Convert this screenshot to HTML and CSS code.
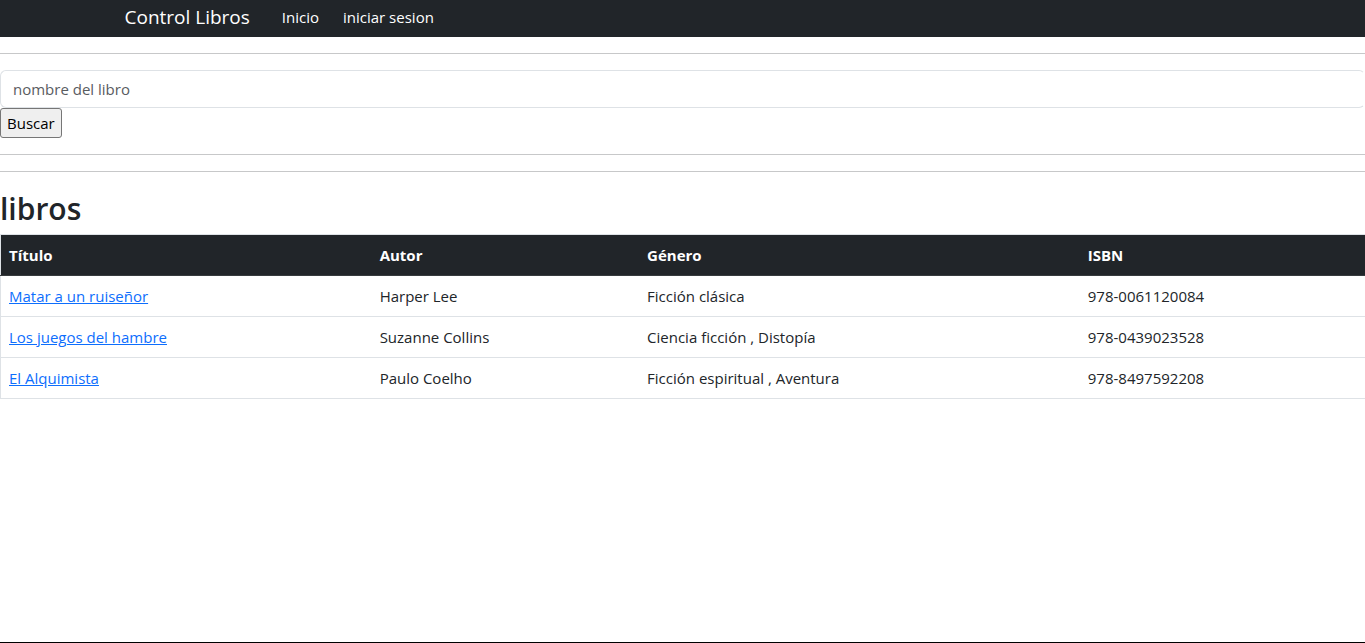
FILE: index.html
```html
<!DOCTYPE html>
<html lang="es">
<head>
<meta charset="utf-8">
<meta name="viewport" content="width=device-width, initial-scale=1">
<title>Control Libros</title>
<link rel="stylesheet" href="styles.css">
</head>
<body>
<nav class="navbar">
  <div class="container">
    <a class="navbar-brand" href="#">Control Libros</a>
    <ul class="navbar-nav">
      <li><a class="nav-link" href="#">Inicio</a></li>
      <li><a class="nav-link" href="#">iniciar sesion</a></li>
    </ul>
  </div>
</nav>
<main>
  <hr class="rule">
  <form class="search">
    <input class="form-control" type="text" name="nombre" placeholder="nombre del libro" aria-label="nombre del libro">
    <button class="search-button" type="submit">Buscar</button>
  </form>
  <hr class="rule">
  <hr class="rule">
  <h2 class="title">libros</h2>
  <table class="table">
    <colgroup>
      <col class="col-title">
      <col class="col-author">
      <col class="col-genre">
      <col class="col-isbn">
    </colgroup>
    <thead>
      <tr><th scope="col">Título</th><th scope="col">Autor</th><th scope="col">Género</th><th scope="col">ISBN</th></tr>
    </thead>
    <tbody>
      <tr><td><a class="book-link" href="#">Matar a un ruiseñor</a></td><td>Harper Lee</td><td>Ficción clásica</td><td>978-0061120084</td></tr>
      <tr><td><a class="book-link" href="#">Los juegos del hambre</a></td><td>Suzanne Collins</td><td>Ciencia ficción , Distopía</td><td>978-0439023528</td></tr>
      <tr><td><a class="book-link" href="#">El Alquimista</a></td><td>Paulo Coelho</td><td>Ficción espiritual , Aventura</td><td>978-8497592208</td></tr>
    </tbody>
  </table>
</main>
</body>
</html>
```
FILE: styles.css
```css
*,
*::before,
*::after {
  box-sizing: border-box;
}

body {
  margin: 0;
  min-height: 100vh;
  border-bottom: 1px solid #000;
  background: #fff;
  color: #212529;
  font-family: "Segoe UI", "Open Sans", "Noto Sans", sans-serif;
  font-size: 15px;
  line-height: 24px;
}

.navbar {
  background: #212529;
}

.container {
  display: flex;
  align-items: center;
  max-width: 1140px;
  min-height: 37px;
  margin: 0 auto;
  padding: 0 12px 4px;
}

.navbar-brand {
  margin-right: 32px;
  color: #fff;
  font-size: 19px;
  text-decoration: none;
}

.navbar-nav {
  display: flex;
  gap: 24px;
  margin: 0;
  padding: 0;
  list-style: none;
}

.nav-link {
  color: #fff;
  text-decoration: none;
}

.rule {
  height: 1px;
  margin: 16px 0;
  border: 0;
  background: #c7c8c9;
}

.form-control {
  display: block;
  width: 100%;
  padding: 6px 12px;
  border: 1px solid #dee2e6;
  border-right-color: transparent;
  border-radius: 6px;
  background: #fff;
  color: #212529;
  font: inherit;
}

.form-control::placeholder {
  color: #595c5f;
  opacity: 1;
}

.search-button {
  display: block;
  padding: 1px 6px;
  border: 1px solid #767676;
  border-radius: 3px;
  background: #efefef;
  color: #000;
  font: inherit;
  line-height: 26px;
}

.title {
  margin: 0 0 4px;
  font-size: 30px;
  font-weight: 600;
  line-height: 42px;
}

.table {
  width: 100%;
  border: 1px solid #dee2e6;
  border-right: 0;
  border-collapse: collapse;
  table-layout: fixed;
}

.col-title {
  width: 27.2%;
}

.col-author {
  width: 19.6%;
}

.col-genre {
  width: 32.3%;
}

.table th,
.table td {
  padding: 8px;
  border-bottom: 1px solid #dee2e6;
  text-align: left;
}

.table th {
  border-bottom-color: #373b3e;
  background: #212529;
  color: #fff;
  font-weight: 700;
}

.book-link {
  color: #0d6efd;
}
```
